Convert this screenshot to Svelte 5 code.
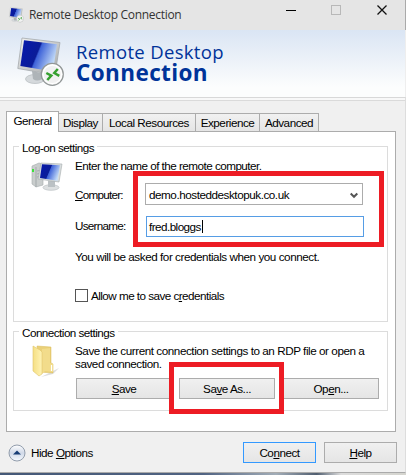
<script>
  const tabs = [
    { label: 'General', width: 53 },
    { label: 'Display', width: 45 },
    { label: 'Local Resources', width: 94 },
    { label: 'Experience', width: 65 },
    { label: 'Advanced', width: 60 }
  ];
  let active = $state('General');
  let computer = $state('demo.hosteddesktopuk.co.uk');
  let username = $state('fred.bloggs');
</script>

{#snippet monitor(size)}
  <svg width={size} height={size} viewBox="0 0 48 48" overflow="visible">
    <defs>
      <linearGradient id="screen" x1="0" y1=".1" x2="1" y2=".45">
        <stop offset="0" stop-color="#1838cc" /><stop offset=".1" stop-color="#0719a8" /><stop offset=".5" stop-color="#0a1c98" />
        <stop offset=".54" stop-color="#3d62d8" /><stop offset="1" stop-color="#c4dcf8" />
      </linearGradient>
      <linearGradient id="bezel" x1="0" y1="0" x2="1" y2="1">
        <stop offset="0" stop-color="#f3f3f1" /><stop offset="1" stop-color="#a3a7a9" />
      </linearGradient>
    </defs>
    <ellipse cx="18" cy="42" rx="9.500" ry="4.500" fill="#d5d9dc" stroke="#b5babd" stroke-width=".7" />
    <path d="M15 34l9 2 1 6q-5 3-9 0z" fill="#aeb4b8" />
    <path d="M5 1L43 5.500 38 38 .8 31.500z" fill="url(#bezel)" stroke="#a5aaad" stroke-width=".8" />
    <path d="M7 3.200L40 7.200 36 34.500 3.400 29z" fill="url(#screen)" />
    <circle cx="35.300" cy="37.300" r="11" fill="#f1f1f1" stroke="#929797" stroke-width="1.200" />
    <circle cx="35.300" cy="37.300" r="9.300" fill="none" stroke="#fff" stroke-width="1.300" />
    <path d="M29.300 36l5 2.700-4 4.300M40.800 32l-3.500 4 5 2.800" fill="none" stroke="#36a02f" stroke-width="2.500" />
  </svg>
{/snippet}

<main>
  <header class="titlebar">
    <span class="small-icon">{@render monitor(15)}</span>
    <span class="title">Remote Desktop Connection</span>
    <svg class="controls" width="114" height="30" viewBox="0 0 114 30" fill="none">
      <path d="M0 10.500h10" stroke="#000" />
      <rect x="45.500" y="5.500" width="9" height="9" stroke="#b8b8b8" />
      <path d="M91.500 5.500l9 9M100.500 5.500l-9 9" stroke="#111" stroke-width="1.300" />
    </svg>
  </header>

  <section class="banner">
    <span class="big-icon">{@render monitor(48)}</span>
    <h1><span>Remote Desktop</span><b>Connection</b></h1>
  </section>

  <section class="content">
    <nav>
      {#each tabs as tab}
        <button class:active={active === tab.label} style:width="{tab.width}px" onclick={() => (active = tab.label)}>{tab.label}</button>
      {/each}
    </nav>

    <div class="panel">
      <fieldset class="logon">
        <legend>Log-on settings</legend>
        <svg class="pc" width="32" height="30" viewBox="0 0 32 30">
          <path d="M1 4l7-3 4 1v21l-7 2-4-3z" fill="#c9cdcd" stroke="#a5abad" stroke-width=".6" />
          <path d="M5 5v20M6 9l5-1M6 12l5-1M6 15l5-1" stroke="#939b9e" stroke-width=".7" />
          <path d="M2 7v3" stroke="#3be13a" stroke-width="2" />
          <ellipse cx="20" cy="25.500" rx="8" ry="2.800" fill="#dde0e1" stroke="#b9bfc1" stroke-width=".7" />
          <path d="M17 19h7v6h-7z" fill="#bbc1c4" />
          <path d="M10 1l21 1-3 18-21-3z" fill="#d8dddd" stroke="#a5abad" stroke-width=".6" />
          <path d="M11 2.200l18 1-2.500 15.500-17.500-2.700z" fill="url(#screen)" />
        </svg>
        <div class="fields">
          <p class="intro">Enter the name of the remote computer.</p>
          <div class="row computer">
            <span class="lab"><u>C</u>omputer:</span>
            <div class="combo">
              <span>{computer}</span>
              <svg width="8" height="7" viewBox="0 0 8 7"><path d="M.7 1.500L4 4.800l3.300-3.300" fill="none" stroke="#555" stroke-width="2" /></svg>
            </div>
          </div>
          <div class="row user">
            <span class="lab">Username:</span>
            <div class="input"><span>{username}</span><i></i></div>
          </div>
          <p class="note">You will be asked for credentials when you connect.</p>
          <label class="check"><i></i><span>Allow me to save c<u>r</u>edentials</span></label>
        </div>
      </fieldset>

      <fieldset class="connection">
        <legend>Connection settings</legend>
        <svg class="folder" width="28" height="33" viewBox="0 0 28 33">
          <defs><linearGradient id="fold"><stop stop-color="#f5df83" /><stop offset="1" stop-color="#fff3b5" /></linearGradient></defs>
          <path d="M17 28l10-5-6 6-12 3z" fill="#dedede" />
          <path d="M5 1l14 1v16l2 1v9l-14-1z" fill="#ead078" stroke="#d9bb58" stroke-width=".5" />
          <path d="M10 4l8-1v15l3 1v8l-8-1-3 3z" fill="#f2dc8b" />
          <path d="M1 1l7 4 2 2v22l-3 2-6-5z" fill="url(#fold)" stroke="#dfc46a" stroke-width=".6" />
          <path d="M19.500 20v6" stroke="#fff" stroke-width="1.200" />
        </svg>
        <div class="fields">
          <p class="save1">Save the current connection settings to an RDP file or open a</p>
          <p class="save2">saved connection.</p>
          <div class="buttons">
            <button><span><u>S</u>ave</span></button>
            <button><span>Sa<u>v</u>e As...</span></button>
            <button><span>Op<u>e</u>n...</span></button>
          </div>
        </div>
      </fieldset>
    </div>

    <footer>
      <svg width="18" height="18" viewBox="0 0 18 18">
        <defs><linearGradient id="round" x2="0" y2="1"><stop stop-color="#fff" /><stop offset=".5" stop-color="#d0d9e8" /><stop offset="1" stop-color="#f7fbff" /></linearGradient></defs>
        <circle cx="9" cy="9" r="8" fill="url(#round)" stroke="#929dac" />
        <path d="M5 10.500L9 6.500l4 4z" fill="#173d75" />
      </svg>
      <span class="hide">Hide <u>O</u>ptions</span>
      <button class="default"><span>Co<u>n</u>nect</span></button>
      <button><span><u>H</u>elp</span></button>
    </footer>
  </section>
  <div class="desktop"></div>
  <div class="mark first"></div>
  <div class="mark second"></div>
</main>

<style>
  :global(body) { margin: 0; }
  * { box-sizing: border-box; }
  main { position: relative; width: 406px; height: 475px; overflow: hidden; background: #f0f0f0; color: #000; font: 11.7px/14px "Liberation Sans", Arial, sans-serif; letter-spacing: -.48px; white-space: nowrap; }
  p, h1, fieldset { margin: 0; padding: 0; }
  svg { display: block; flex: none; }
  u { text-decoration: underline; text-underline-offset: 1px; }
  .titlebar { display: flex; height: 30px; background: #e5e5e5; border-right: 1px solid #aaa; }
  .small-icon { padding: 7px 0 0 9px; }
  .title { flex: none; width: 262px; padding: 6px 0 0 5px; font: 12px/17px "Open Sans", sans-serif; color: #333; letter-spacing: -.3px; }
  .banner { display: flex; height: 67px; background: linear-gradient(#dae5f4, #eef3f9 50%, #fcfdfd 85%); border-right: 1px solid #eee; }
  .big-icon { padding: 7px 0 0 17px; }
  h1 { padding: 11px 0 0 11px; color: #003399; font: 18.500px/21px "Open Sans", sans-serif; letter-spacing: .33px; }
  h1 span, h1 b { display: block; }
  h1 b { font-size: 22.500px; line-height: 22px; letter-spacing: .4px; }
  .content { height: 376px; padding: 13px 8px 0 6px; border-top: 1px solid #d8d8d8; border-right: 1px solid #ddd; border-bottom: 1px solid #aaa; box-shadow: inset 0 2px #f8f8f8, inset 0 3px #dadada; }
  nav { display: flex; align-items: flex-end; height: 20px; }
  nav button { flex: none; height: 18px; padding: 1px 0 0; margin: 0 0 0 -1px; font: inherit; letter-spacing: inherit; color: #000; background: linear-gradient(#f1f1f1, #e5e5e5); border: 1px solid #acacac; border-bottom: 0; }
  nav button.active { height: 21px; margin: 0 0 -1px; padding-bottom: 3px; background: #fff; z-index: 1; }
  .panel { width: 390px; height: 301px; padding: 8px 7px 0 6px; background: #fff; border: 1px solid #acacac; }
  fieldset { min-width: 0; display: flex; width: 375px; border: 1px solid #dcdcdc; }
  legend { height: 12px; margin-left: 5px; padding: 0 3px; line-height: 16px; letter-spacing: -.53px; }
  .logon { height: 182px; }
  .connection { height: 86px; margin-top: 3px; }
  .pc { margin: 10px 0 0 17px; }
  .logon .fields { padding: 7px 0 0 12px; }
  .intro { letter-spacing: -.53px; }
  .row { display: flex; }
  .lab { width: 70px; padding-top: 5px; letter-spacing: -.75px; }
  .computer { margin-top: 10px; }
  .user .lab { padding-top: 3px; }
  .combo, .input { display: flex; width: 218px; height: 22px; border: 1px solid #acacac; padding: 4px 4px 0 3px; justify-content: space-between; letter-spacing: -.46px; }
  .combo svg { margin-top: 4px; }
  .user { margin-top: 11px; }
  .input { margin-left: 1px; height: 21px; border-color: #569de5; justify-content: flex-start; padding: 3px 0 0 2px; letter-spacing: -.55px; }
  .input i { width: 1px; height: 13px; margin-left: 1px; background: #000; }
  .note { margin-top: 13px; letter-spacing: -.45px; }
  .check { display: flex; margin-top: 25px; }
  .check i { width: 13px; height: 13px; border: 1px solid #555; margin-right: 3px; }
  .check span { letter-spacing: -.54px; }
  .folder { margin: 8px 0 0 18px; }
  .connection .fields { padding: 7px 0 0 15px; }
  .save1, .save2 { letter-spacing: -.45px; }
  .save2 { margin-top: -1px; }
  .buttons { display: flex; gap: 7px; padding: 7px 0 0 1px; }
  .buttons button:last-child { margin-left: 1px; }
  .buttons button, footer button { flex: none; width: 96px; height: 21px; padding: 0; color: #000; font: inherit; letter-spacing: inherit; background: linear-gradient(#f0f0f0, #e5e5e5); border: 1px solid #acacac; }
  footer { display: flex; align-items: center; width: 391px; height: 40px; padding: 1px 0 0 2px; }
  .hide { flex: none; width: 217px; padding-left: 5px; }
  footer button { width: 73px; }
  footer .default { margin-right: 8px; border-color: #3399ff; }
  .desktop { height: 2px; background: linear-gradient(90deg, #445877, #506382 50%, #a2adb8 68%, #505e70 78%, #ddd 84%, #d5d5cf); }
  .mark { position: absolute; border: 5px solid #ed1c24; }
  .first { left: 133px; top: 171px; width: 251px; height: 76px; }
  .second { left: 169px; top: 362px; width: 115px; height: 52px; }
</style>
